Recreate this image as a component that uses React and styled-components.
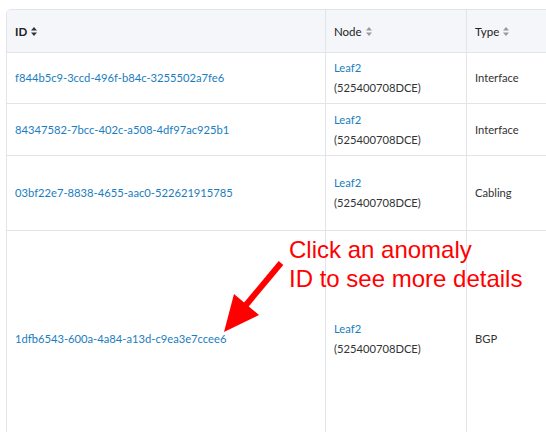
import React from 'react';
import styled, { createGlobalStyle } from 'styled-components';

const GlobalStyle = createGlobalStyle`
  html, body {
    margin: 0;
    padding: 0;
    background: #fff;
    overflow: hidden;
  }
  body {
    font-family: Lato, "Open Sans", sans-serif;
  }
`;

const COLORS = {
  border: '#e2e4e8',
  head: '#f4f6f9',
  link: '#1a7dc0',
  text: '#333',
  red: '#ff0000',
};

const Page = styled.div`
  position: relative;
  width: 546px;
  height: 432px;
  padding: 9px 0 0 6px;
  box-sizing: border-box;
  overflow: hidden;
`;

const Table = styled.div`
  display: grid;
  grid-template-columns: 319px 141px 160px;
  width: 621px;
  border: 1px solid ${COLORS.border};
  border-radius: 5px 5px 0 0;
  overflow: hidden;
`;

const HeadCell = styled.div`
  display: flex;
  align-items: center;
  gap: 4px;
  height: 42px;
  padding: 0 8px;
  background: ${COLORS.head};
  border-right: 1px solid ${COLORS.border};
  border-bottom: 1px solid ${COLORS.border};
  font-size: 11.5px;
  font-weight: ${p => (p.strong ? 700 : 400)};
  color: #222;
`;

const Cell = styled.div`
  display: flex;
  flex-direction: column;
  justify-content: center;
  height: ${p => p.h}px;
  padding: 0 8px;
  border-right: 1px solid ${COLORS.border};
  border-bottom: 1px solid ${COLORS.border};
  font-size: 11.2px;
  line-height: 20px;
  color: ${COLORS.text};
  box-sizing: border-box;
`;

const Link = styled.a`
  color: ${COLORS.link};
  text-decoration: none;
  cursor: pointer;
`;

const Note = styled.div`
  position: absolute;
  left: 289px;
  top: 235px;
  font-family: "Liberation Sans", Arial, sans-serif;
  font-size: 24px;
  line-height: 29px;
  color: ${COLORS.red};
`;

const Arrow = styled.svg`
  position: absolute;
  left: 0;
  top: 0;
  pointer-events: none;
`;

const SortIcon = ({ dark }) => (
  <svg width="6" height="9" viewBox="0 0 6 9">
    <g fill={dark ? '#333' : '#999'}>
      <polygon points="0,3.5 3,0 6,3.5" />
      <polygon points="0,5.5 3,9 6,5.5" />
    </g>
  </svg>
);

const rows = [
  { id: 'f844b5c9-3ccd-496f-b84c-3255502a7fe6', type: 'Interface', h: 51 },
  { id: '84347582-7bcc-402c-a508-4df97ac925b1', type: 'Interface', h: 52 },
  { id: '03bf22e7-8838-4655-aac0-522621915785', type: 'Cabling', h: 75 },
  { id: '1dfb6543-600a-4a84-a13d-c9ea3e7ccee6', type: 'BGP', h: 216 },
];

export default function App() {
  return (
    <Page>
      <GlobalStyle />
      <Table>
        <HeadCell strong>
          ID <SortIcon dark />
        </HeadCell>
        <HeadCell>
          Node <SortIcon />
        </HeadCell>
        <HeadCell>
          Type <SortIcon />
        </HeadCell>
        {rows.map(r => (
          <React.Fragment key={r.id}>
            <Cell h={r.h}>
              <Link>{r.id}</Link>
            </Cell>
            <Cell h={r.h}>
              <Link>Leaf2</Link>
              <span>(525400708DCE)</span>
            </Cell>
            <Cell h={r.h}>{r.type}</Cell>
          </React.Fragment>
        ))}
      </Table>
      <Note>
        Click an anomaly
        <br />
        ID to see more details
      </Note>
      <Arrow width="546" height="432" viewBox="0 0 546 432">
        <line x1="281" y1="263" x2="246" y2="305" stroke={COLORS.red} strokeWidth="6" />
        <polygon points="224,332 234,294 259,315" fill={COLORS.red} />
      </Arrow>
    </Page>
  );
}
